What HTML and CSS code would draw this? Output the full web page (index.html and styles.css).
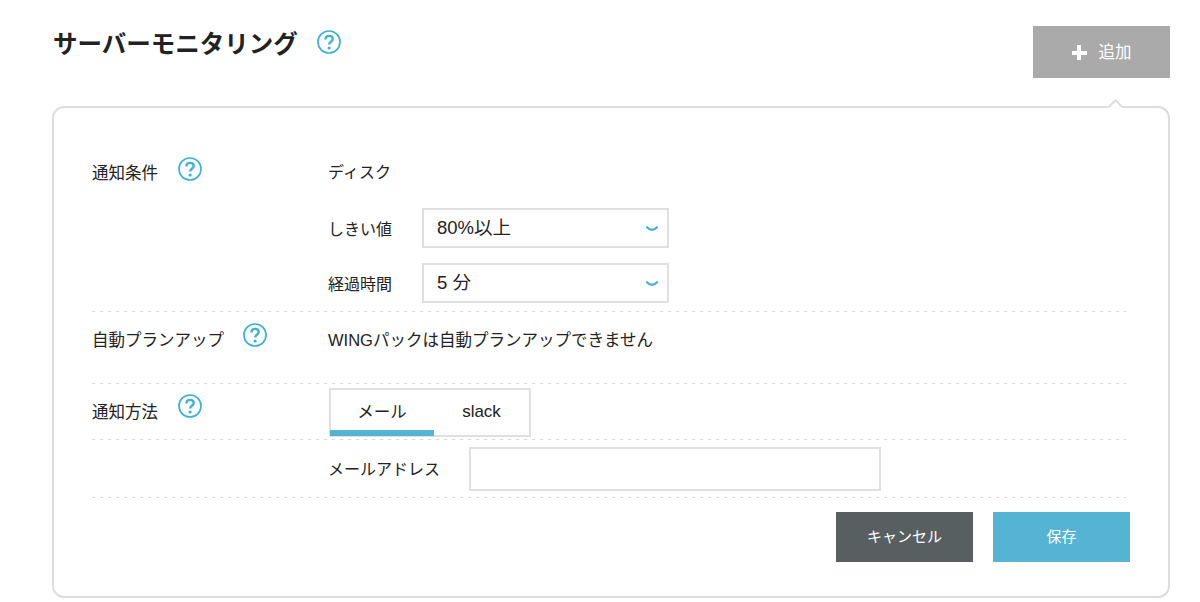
FILE: index.html

```html
<!DOCTYPE html>
<html lang="ja">
<head>
  <meta charset="UTF-8">
  <meta name="viewport" content="width=device-width, initial-scale=1.0">
  <title>サーバーモニタリング</title>
  <link rel="stylesheet" href="styles.css">
</head>
<body>
  <svg class="icon-defs" width="0" height="0">
    <symbol id="help" viewBox="0 0 24 24">
      <circle cx="12" cy="12" r="11" fill="none" stroke="#3db1d6" stroke-width="1.7"/>
      <path d="M8.4 9.4c0-2.2 1.6-3.5 3.7-3.5s3.6 1.2 3.6 3.1c0 2.8-3.6 2.7-3.6 5.6" fill="none" stroke="#3db1d6" stroke-width="2.3"/>
      <circle cx="12.1" cy="18" r="1.6" fill="#3db1d6"/>
    </symbol>
    <symbol id="chevron" viewBox="0 0 12 6">
      <path d="M1 1.2c1.5 1.6 3 2.6 5 2.6s3.5-1 5-2.6" fill="none" stroke="#3db1d6" stroke-width="2.2" stroke-linecap="round"/>
    </symbol>
  </svg>

  <div class="page">
    <div class="page-head">
      <div class="title-wrap">
        <h1 class="page-title">サーバーモニタリング</h1>
        <svg class="help-icon"><use href="#help"/></svg>
      </div>
      <button class="add-button" type="button"><span class="add-plus"></span><span class="add-text">追加</span></button>
    </div>

    <div class="panel">
      <span class="panel-notch"></span>

      <div class="form-row row-condition">
        <div class="row-label"><span>通知条件</span><svg class="help-icon"><use href="#help"/></svg></div>
        <div class="row-body">
          <div class="disk-name">ディスク</div>
          <div class="select-line">
            <label class="select-label" for="threshold">しきい値</label>
            <div class="select-wrap">
              <select id="threshold" class="select-box"><option>80%以上</option></select>
              <svg class="select-arrow"><use href="#chevron"/></svg>
            </div>
          </div>
          <div class="select-line">
            <label class="select-label" for="elapsed">経過時間</label>
            <div class="select-wrap">
              <select id="elapsed" class="select-box"><option>5 分</option></select>
              <svg class="select-arrow"><use href="#chevron"/></svg>
            </div>
          </div>
        </div>
      </div>

      <div class="form-row row-plan">
        <div class="row-label"><span>自動プランアップ</span><svg class="help-icon"><use href="#help"/></svg></div>
        <div class="row-body plan-note">WINGパックは自動プランアップできません</div>
      </div>

      <div class="form-row row-method">
        <div class="row-label"><span>通知方法</span><svg class="help-icon"><use href="#help"/></svg></div>
        <div class="row-body">
          <div class="tabs">
            <div class="tab tab-mail active">メール</div>
            <div class="tab tab-slack">slack</div>
          </div>
        </div>
      </div>

      <div class="form-row row-address">
        <div class="row-label"></div>
        <div class="row-body address-line">
          <label class="address-label" for="address">メールアドレス</label>
          <input id="address" class="address-input" type="text">
        </div>
      </div>

      <div class="actions">
        <button class="btn btn-cancel" type="button">キャンセル</button>
        <button class="btn btn-save" type="button">保存</button>
      </div>
    </div>
  </div>
</body>
</html>
```

FILE: styles.css

```css
* {
  box-sizing: border-box;
}

body {
  margin: 0;
  padding: 0;
  background-color: #fff;
  color: #222;
  font-family: "Liberation Sans", "Noto Sans CJK JP", sans-serif;
  font-size: 16px;
  line-height: 26px;
}

.icon-defs {
  position: absolute;
}

.page {
  padding: 26px 30px 0 52px;
}

.page-head {
  display: flex;
  justify-content: space-between;
  height: 52px;
  margin-bottom: 28px;
}

.title-wrap {
  display: flex;
  align-items: flex-start;
  gap: 19px;
  padding-top: 4px;
}

.page-title {
  margin: 2px 0 0 1px;
  font-size: 24.5px;
  line-height: 26px;
  font-weight: 700;
  color: #222;
}

.help-icon {
  width: 24px;
  height: 24px;
  flex: none;
}

.add-button {
  display: flex;
  align-items: center;
  justify-content: center;
  gap: 12px;
  width: 137px;
  height: 52px;
  padding: 0;
  border: none;
  background-color: #aaa;
  color: #fff;
  font: inherit;
  font-size: 16.5px;
}

.add-plus {
  width: 15px;
  height: 15px;
  margin-top: 1px;
  background:
    linear-gradient(#fff, #fff) center / 15px 4px no-repeat,
    linear-gradient(#fff, #fff) center / 4px 15px no-repeat;
}

.panel {
  position: relative;
  height: 492px;
  padding: 0 42px 0 38px;
  border: 2px solid #ddd;
  border-radius: 12px;
}

.panel-notch {
  position: absolute;
  top: -7px;
  right: 47px;
  width: 11px;
  height: 11px;
  background-color: #fff;
  border-top: 2px solid #ddd;
  border-left: 2px solid #ddd;
  transform: rotate(45deg);
}

.form-row {
  display: grid;
  grid-template-columns: 237px 1fr;
  background-image: linear-gradient(to right, #d8d8d8 3px, transparent 3px);
  background-size: 8px 1px;
  background-repeat: repeat-x;
  background-position: left bottom;
}

.row-label {
  display: flex;
  align-items: flex-start;
  align-self: start;
  gap: 20px;
  font-size: 16.5px;
}

.row-label .help-icon {
  margin-top: -3px;
}

.row-condition {
  height: 204px;
  padding-top: 52px;
}

.row-plan {
  height: 72px;
  padding-top: 15px;
}

.row-plan .row-label {
  gap: 19px;
}

.row-plan .help-icon {
  margin-top: -4px;
}

.plan-note {
  margin-left: -1px;
  font-size: 16.5px;
}

.row-method {
  height: 56px;
  padding-top: 4px;
}

.row-method .row-label {
  padding-top: 11px;
}

.row-method .help-icon {
  margin-top: -5px;
}

.row-address {
  height: 58px;
  padding-top: 7px;
}

.disk-name {
  margin: 0 0 22px -1px;
}

.select-line {
  display: flex;
  align-items: center;
  margin-bottom: 15px;
}

.select-label {
  width: 94px;
  margin-left: -1px;
  padding-top: 4px;
}

.select-wrap {
  position: relative;
  width: 247px;
  height: 40px;
}

.select-box {
  appearance: none;
  width: 100%;
  height: 100%;
  padding: 0 13px;
  border: 2px solid #e0e0e0;
  border-radius: 0;
  background-color: #fff;
  color: #222;
  font: inherit;
  font-size: 18.5px;
}

.select-arrow {
  position: absolute;
  top: 18px;
  right: 11px;
  width: 12px;
  height: 6px;
  pointer-events: none;
}

.tabs {
  display: flex;
  width: 202px;
  height: 49px;
  border: 2px solid #e0e0e0;
}

.tab {
  text-align: center;
  line-height: 44px;
  font-size: 16.5px;
}

.tab-mail {
  width: 104px;
  margin-left: -1px;
}

.tab-slack {
  flex: 1;
  font-size: 17px;
}

.tab.active {
  margin-bottom: -1px;
  border-bottom: 6px solid #55b3d3;
}

.address-line {
  display: flex;
  align-items: flex-start;
}

.address-label {
  width: 141px;
  margin-left: -1px;
  line-height: 46px;
}

.address-input {
  width: 412px;
  height: 44px;
  border: 2px solid #e0e0e0;
  border-radius: 0;
  background-color: #fff;
}

.actions {
  display: flex;
  justify-content: flex-end;
  gap: 20px;
  margin-top: 14px;
  margin-right: -4px;
}

.btn {
  width: 137px;
  height: 50px;
  border: none;
  color: #fff;
  font: inherit;
  font-size: 15px;
}

.btn-cancel {
  background-color: #585f60;
}

.btn-save {
  background-color: #55b3d3;
}
```
